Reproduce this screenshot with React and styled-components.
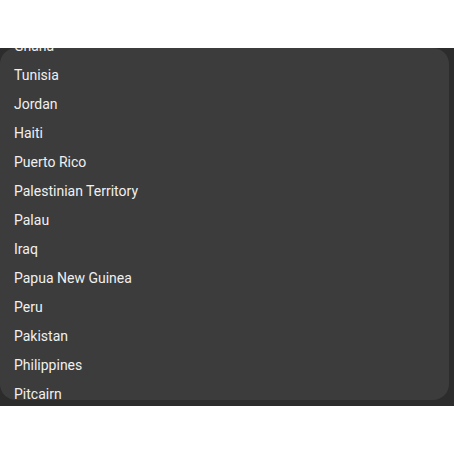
import React from "react";
import styled, { createGlobalStyle } from "styled-components";

const GlobalStyle = createGlobalStyle`
  html, body {
    margin: 0;
    padding: 0;
    background: #ffffff;
  }
  body {
    font-family: Roboto, "Noto Sans", sans-serif;
  }
`;

const countries = [
  "Ghana",
  "Tunisia",
  "Jordan",
  "Haiti",
  "Puerto Rico",
  "Palestinian Territory",
  "Palau",
  "Iraq",
  "Papua New Guinea",
  "Peru",
  "Pakistan",
  "Philippines",
  "Pitcairn",
  "Poland",
];

const App = () => {
  return (
    <>
      <GlobalStyle />
      <Page>
        <Frame>
          <Panel>
            <List>
              {countries.map((name) => (
                <Item key={name}>{name}</Item>
              ))}
            </List>
          </Panel>
        </Frame>
      </Page>
    </>
  );
};

const Page = styled.div`
  width: 454px;
  height: 454px;
  padding-top: 48px;
  box-sizing: border-box;
  background: #ffffff;
`;

const Frame = styled.div`
  height: 358px;
  background: #2c2c2c;
  padding: 0 5px 6px 0;
  box-sizing: border-box;
  display: flex;
`;

const Panel = styled.div`
  flex: 1;
  background: #3c3c3c;
  border-radius: 16px;
  overflow: hidden;
`;

const List = styled.ul`
  list-style: none;
  margin: -16px 0 0;
  padding: 0;
`;

const Item = styled.li`
  height: 29px;
  line-height: 29px;
  padding-left: 14px;
  font-size: 14px;
  color: #f0f0f0;
  white-space: nowrap;
`;

export default App;
